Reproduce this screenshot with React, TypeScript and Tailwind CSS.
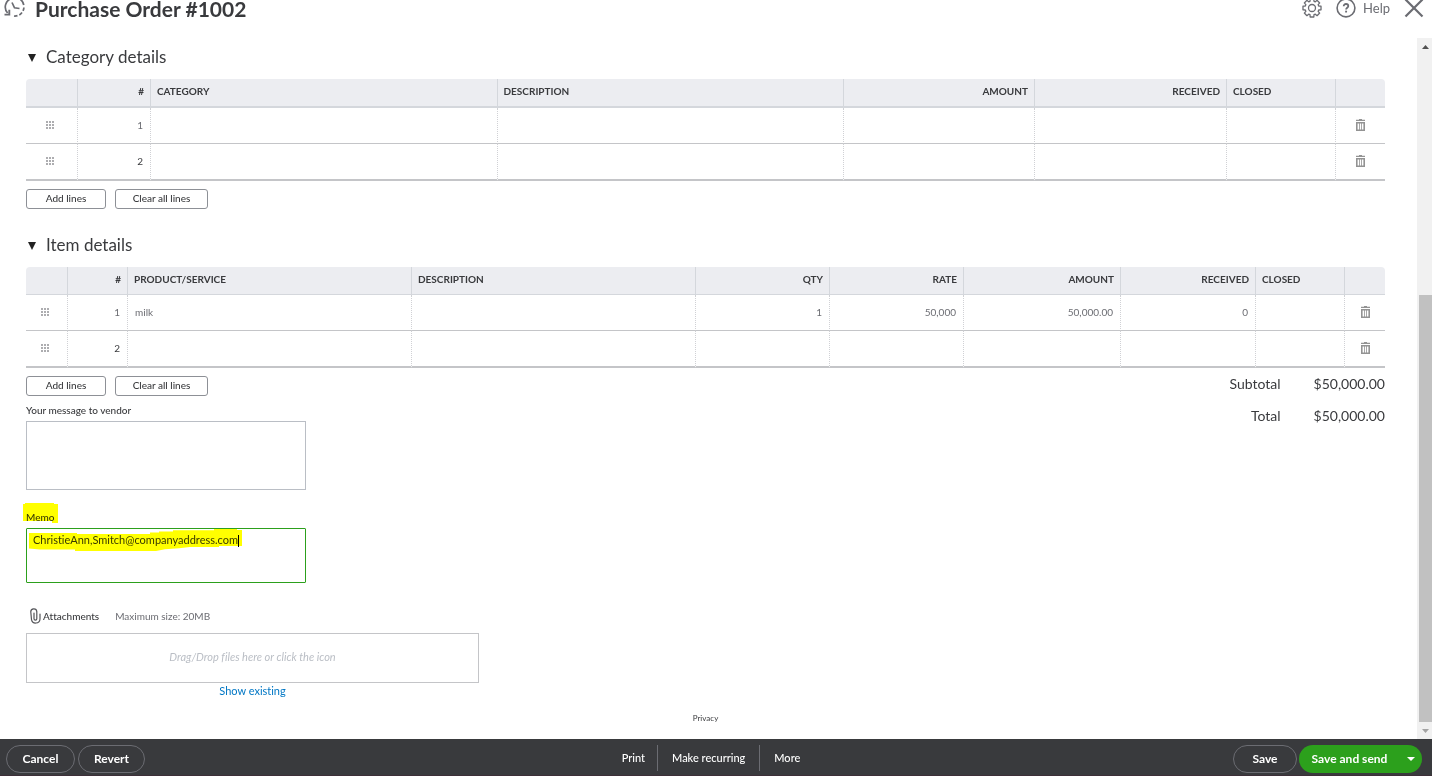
import type { ReactNode } from "react";

type Column = { label: string; width?: string; align?: "right" | "left" };

const categoryColumns: Column[] = [
  { label: "", width: "w-[52px]" },
  { label: "#", width: "w-[73px]", align: "right" },
  { label: "CATEGORY" },
  { label: "DESCRIPTION" },
  { label: "AMOUNT", width: "w-[191px]", align: "right" },
  { label: "RECEIVED", width: "w-[192px]", align: "right" },
  { label: "CLOSED", width: "w-[109px]" },
  { label: "", width: "w-[49px]" },
];

const itemColumns: Column[] = [
  { label: "", width: "w-[42px]" },
  { label: "#", width: "w-[60px]", align: "right" },
  { label: "PRODUCT/SERVICE" },
  { label: "DESCRIPTION" },
  { label: "QTY", width: "w-[134px]", align: "right" },
  { label: "RATE", width: "w-[134px]", align: "right" },
  { label: "AMOUNT", width: "w-[157px]", align: "right" },
  { label: "RECEIVED", width: "w-[135px]", align: "right" },
  { label: "CLOSED", width: "w-[89px]" },
  { label: "", width: "w-[40px]" },
];

const categoryRows = [
  ["1", "", "", "", "", ""],
  ["2", "", "", "", "", ""],
];

const itemRows = [
  ["1", "milk", "", "1", "50,000", "50,000.00", "0", ""],
  ["2", "", "", "", "", "", "", ""],
];

function HistoryIcon() {
  return (
    <svg width="22" height="22" viewBox="0 0 22 22" fill="none" stroke="#6b6c72" strokeWidth="1.7" aria-hidden="true">
      <path d="M3.600 17A9 9 0 0 1 7 2.600" />
      <path d="M9.500 1.600A9 9 0 0 1 19.800 9" />
      <path d="M19.900 11.500a9 9 0 0 1-10 8.500" strokeDasharray="3.500 2" />
      <path d="M0.500 18.600h4.800v-4.800" strokeWidth="1.900" />
      <path d="M8 6.500l2.500 5.300 5 .7" />
    </svg>
  );
}

function GearIcon() {
  const teeth = 8;
  const points: string[] = [];
  for (let i = 0; i < teeth; i++) {
    const base = (i / teeth) * Math.PI * 2 - Math.PI / 2;
    [
      [-0.29, 7],
      [-0.2, 9.2],
      [0.2, 9.2],
      [0.29, 7],
    ].forEach(([offset, radius]) => {
      points.push(
        `${(10 + Math.cos(base + offset) * radius).toFixed(2)},${(10 + Math.sin(base + offset) * radius).toFixed(2)}`
      );
    });
  }
  return (
    <svg width="20" height="20" viewBox="0 0 20 20" fill="none" stroke="#6b6c72" strokeWidth="1.3" strokeLinejoin="round" aria-hidden="true">
      <polygon points={points.join(" ")} />
      <circle cx="10" cy="10" r="3.500" />
    </svg>
  );
}

function HelpIcon() {
  return (
    <svg width="20" height="20" viewBox="0 0 20 20" fill="none" stroke="#6b6c72" aria-hidden="true">
      <circle cx="10" cy="10" r="8.900" strokeWidth="1.600" />
      <path d="M7.700 8.200c0-1.400 1-2.200 2.300-2.200s2.300.8 2.300 2c0 1.700-2.200 1.700-2.200 3.500" strokeWidth="1.800" />
      <path d="M10.100 12.700v1.800" strokeWidth="1.900" />
    </svg>
  );
}

function TrashIcon() {
  return (
    <svg width="9" height="12" viewBox="0 0 9 12" fill="#939393" aria-hidden="true">
      <path d="M3 0h3v.8h3V2H0V.8h3z" />
      <path fillRule="evenodd" d="M0 3h9v9H0zM1.600 4.500v6h1.600v-6zM4 4.500v6h1v-6zM5.800 4.500v6h1.600v-6z" />
    </svg>
  );
}

function DragIcon() {
  return (
    <svg width="8" height="8" viewBox="0 0 8 8" fill="#adadb0" aria-hidden="true">
      {[0, 3, 6].map((y) =>
        [0, 3, 6].map((x) => <rect key={`${x}-${y}`} x={x} y={y} width="2" height="2" />)
      )}
    </svg>
  );
}

function PaperclipIcon() {
  return (
    <svg width="12" height="16" viewBox="0 0 12 16" fill="none" stroke="#55565a" strokeWidth="1.200" strokeLinecap="round" aria-hidden="true">
      <path d="M11 6v5a4.300 4.300 0 0 1-8.500.6L1.800 4a3 3 0 0 1 6-.4v7.200a1.400 1.400 0 0 1-2.800 0V5" />
    </svg>
  );
}

function LineTable({
  label,
  columns,
  rows,
  headBorder,
}: {
  label: string;
  columns: Column[];
  rows: string[][];
  headBorder: string;
}) {
  const last = columns.length - 1;
  return (
    <table aria-label={label} className="w-full table-fixed border-separate border-spacing-0 text-[10px] leading-3 text-[#393a3d]">
      <thead>
        <tr>
          {columns.map((column, i) => (
            <th
              key={i}
              scope="col"
              aria-label={column.label || (i === 0 ? "Reorder" : "Delete")}
              className={`${column.width ?? ""} ${headBorder} bg-[#ecedf1] border-[#d4d7dc] px-1.5 pt-1.5 pb-[9px] font-bold ${
                column.align === "right" ? "text-right" : "text-left"
              } ${i < last ? "border-r" : "rounded-tr-sm"} ${i === 0 ? "rounded-tl-sm" : ""}`}
            >
              {column.label}
            </th>
          ))}
        </tr>
      </thead>
      <tbody>
        {rows.map((row, r) => {
          const line = r === rows.length - 1 ? "border-b-2 h-[37px]" : "border-b h-9";
          return (
            <tr key={r}>
              {columns.map((column, i) => {
                let content: ReactNode = row[i - 1];
                if (i === 0)
                  content = (
                    <button type="button" aria-label={`Move line ${r + 1}`} className="mx-auto block cursor-move pr-1">
                      <DragIcon />
                    </button>
                  );
                if (i === last)
                  content = (
                    <button type="button" aria-label={`Delete line ${r + 1}`} className="mx-auto block">
                      <TrashIcon />
                    </button>
                  );
                return (
                  <td
                    key={i}
                    className={`${line} border-b-[#c4c5c8] border-r-[#d0d1d5] px-[7px] pt-0 pb-0.5 ${
                      column.align === "right" ? "text-right" : "text-left"
                    } ${i < last ? "border-r [border-right-style:dotted]" : ""} ${
                      r === 0 || i !== 1 ? "text-[#6b6c72]" : ""
                    }`}
                  >
                    {content}
                  </td>
                );
              })}
            </tr>
          );
        })}
      </tbody>
    </table>
  );
}

function LineButtons() {
  const style =
    "h-5 rounded-[3px] border border-[#8d9096] bg-white px-4 pb-0.5 text-[10px] leading-3 font-medium text-[#393a3d]";
  return (
    <div className="mt-2 flex gap-[9px]">
      <button type="button" className={`${style} min-w-20`}>
        Add lines
      </button>
      <button type="button" className={`${style} min-w-[93px]`}>
        Clear all lines
      </button>
    </div>
  );
}

function SectionTitle({ children }: { children: ReactNode }) {
  return (
    <h2 className="text-[17px] leading-[22px] text-[#393a3d]">
      <button type="button" aria-expanded="true" className="flex items-center gap-2.5 pl-0.5">
        <svg width="8" height="8" viewBox="0 0 8 8" fill="#222" className="mt-0.5" aria-hidden="true">
          <path d="M0 0h8L4 8z" />
        </svg>
        {children}
      </button>
    </h2>
  );
}

const pill = "h-7 rounded-full border border-[#6b6c72] text-xs leading-4 font-bold text-white";

export default function App() {
  return (
    <div className="flex min-h-screen flex-col bg-white font-['Lato',sans-serif] text-[#393a3d] [font-variant-ligatures:none]">
      <header className="flex h-[38px] items-start justify-between pr-2 pl-1">
        <div className="flex items-start gap-[9px]">
          <button type="button" aria-label="Recent transactions" className="-mt-1">
            <HistoryIcon />
          </button>
          <h1 className="text-[21px] leading-[18px] font-bold">Purchase Order #1002</h1>
        </div>
        <div className="flex items-start text-[#6b6c72]">
          <button type="button" aria-label="Settings" className="-mt-0.5 mr-3.5">
            <GearIcon />
          </button>
          <button type="button" className="mr-3.5 flex items-start gap-[7px] text-[13px] leading-4">
            <span className="-mt-0.5">
              <HelpIcon />
            </span>
            Help
          </button>
          <button type="button" aria-label="Close" className="-mt-0.5">
            <svg width="20" height="20" viewBox="0 0 20 20" stroke="#6b6c72" strokeWidth="2.200" aria-hidden="true">
              <path d="M1.500 1.500l17 17M18.500 1.500l-17 17" />
            </svg>
          </button>
        </div>
      </header>

      <div className="flex grow">
        <main className="grow pt-2 pr-8 pl-[26px]">
          <section>
            <SectionTitle>Category details</SectionTitle>
            <div className="mt-[11px]">
              <LineTable label="Category details" columns={categoryColumns} rows={categoryRows} headBorder="border-b-2" />
            </div>
            <LineButtons />
          </section>

          <section className="mt-[25px]">
            <SectionTitle>Item details</SectionTitle>
            <div className="mt-[11px]">
              <LineTable label="Item details" columns={itemColumns} rows={itemRows} headBorder="border-b" />
            </div>
          </section>

          <div className="flex items-start justify-between">
            <div>
              <LineButtons />
              <div className="mt-2 flex flex-col">
                <label htmlFor="message" className="text-[10px] leading-3 font-medium">
                  Your message to vendor
                </label>
                <textarea
                  id="message"
                  className="mt-[5px] block h-[69px] w-[280px] resize-none border border-[#babec5] px-2 py-1 text-[11px] leading-4 outline-none"
                />
              </div>
              <div className="relative mt-[21px] flex flex-col">
                <label htmlFor="memo" className="text-[10px] leading-3 font-medium">
                  Memo
                </label>
                <textarea
                  id="memo"
                  defaultValue="ChristieAnn,Smitch@companyaddress.com"
                  className="mt-[5px] block h-[55px] w-[280px] resize-none rounded-[1px] border border-[#2ca01c] px-1.5 py-[3px] text-[11px] leading-4 outline-none"
                />
                <svg
                  className="pointer-events-none absolute -top-2 -left-[3px] mix-blend-multiply"
                  width="220"
                  height="50"
                  viewBox="0 0 220 50"
                  fill="#ffff00"
                  aria-hidden="true"
                >
                  <path d="M0 1h2V0h29v1h4v19h-6v-2H0z" />
                  <path d="M6 30h48v1h73v-1.500h9v-1h14v-1.300h41v-1.300h23v1h5v16h-23v1h-29l-11 1.300-14 1-9 1.700H52v-1.300H17L6 45.500z" />
                </svg>
                <span className="pointer-events-none absolute top-6 left-[212px] h-3 w-px bg-black" />
              </div>
            </div>
            <dl className="mt-2 grid grid-cols-[auto_auto] gap-x-[33px] gap-y-4 text-right text-sm leading-4">
              <dt>Subtotal</dt>
              <dd>$50,000.00</dd>
              <dt>Total</dt>
              <dd>$50,000.00</dd>
            </dl>
          </div>

          <section className="mt-[25px] w-[453px]">
            <div className="flex items-center pl-[3px] text-[10px] leading-4">
              <PaperclipIcon />
              <h3 className="ml-0.5 font-medium">Attachments</h3>
              <span className="ml-4 text-[#6b6c72]">Maximum size: 20MB</span>
            </div>
            <button
              type="button"
              className="mt-[9px] block h-[50px] w-full border border-[#c4c5c8] pb-0.5 text-[11px] leading-4 text-[#babec5] italic"
            >
              Drag/Drop files here or click the icon
            </button>
            <div className="text-center text-[11px] leading-4">
              <a href="#existing" className="text-[#0077c5]">
                Show existing
              </a>
            </div>
          </section>

          <div className="mt-[11px] text-center text-[8px] leading-4">
            <a href="#privacy">Privacy</a>
          </div>
        </main>

        <div className="flex w-[15px] shrink-0 flex-col bg-[#f1f1f1] pl-0.5" aria-hidden="true">
          <div className="flex h-[17px] items-center justify-center">
            <svg width="7" height="4" viewBox="0 0 7 4" fill="#505050">
              <path d="M0 4h7L3.500 0z" />
            </svg>
          </div>
          <div className="grow-[240]" />
          <div className="grow-[427] bg-[#c1c1c1]" />
          <div className="flex h-[17px] items-center justify-center">
            <svg width="7" height="4" viewBox="0 0 7 4" fill="#a3a3a3">
              <path d="M0 0h7L3.500 4z" />
            </svg>
          </div>
        </div>
      </div>

      <footer className="grid grid-cols-[1fr_auto_1fr] items-start border-b border-[#3d2f38] bg-[#393a3d] pt-1.5 pr-2.5 pb-0.5 pl-1.5">
        <div className="flex gap-[3px]">
          <button type="button" className={`${pill} w-[69px]`}>
            Cancel
          </button>
          <button type="button" className={`${pill} w-[67px]`}>
            Revert
          </button>
        </div>
        <nav className="flex pr-1 text-[11px] leading-[26px] font-medium text-white">
          <button type="button" className="border-r border-[#6b6c72] px-3">
            Print
          </button>
          <button type="button" className="border-r border-[#6b6c72] px-3.5">
            Make recurring
          </button>
          <button type="button" className="px-3.5">
            More
          </button>
        </nav>
        <div className="flex justify-end gap-[2px]">
          <button type="button" className={`${pill} w-16`}>
            Save
          </button>
          <div className="flex h-7 rounded-full bg-[#2ca01c] text-xs leading-4 font-bold text-white">
            <button type="button" className="w-[101px]">
              Save and send
            </button>
            <button type="button" aria-label="More save options" className="flex w-[22px] items-center justify-center">
              <svg width="8" height="4" viewBox="0 0 8 4" fill="#fff" aria-hidden="true">
                <path d="M0 0h8L4 4z" />
              </svg>
            </button>
          </div>
        </div>
      </footer>
    </div>
  );
}
